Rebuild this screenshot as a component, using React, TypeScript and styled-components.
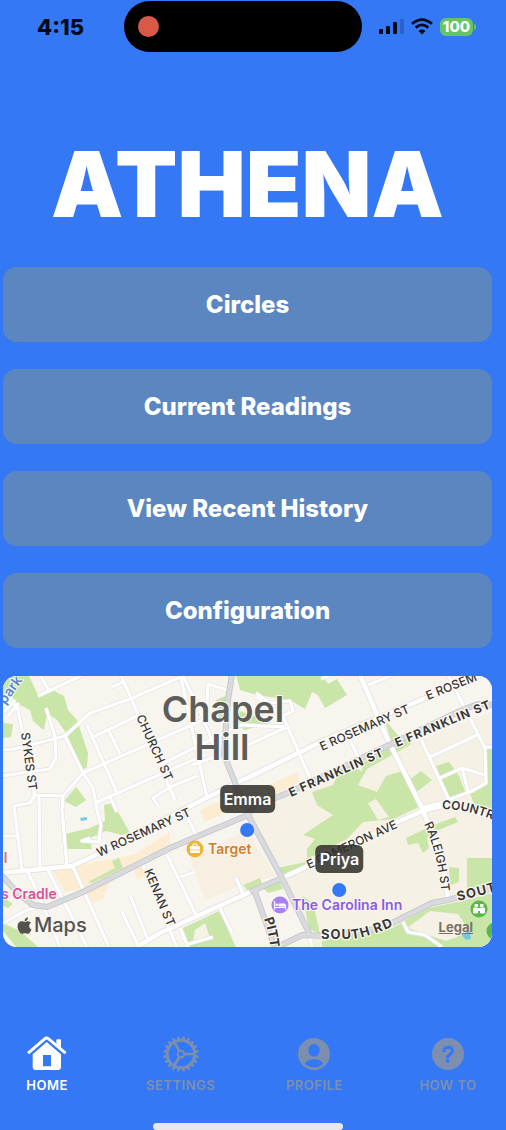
import React from "react";
import styled, { createGlobalStyle } from "styled-components";
import { FaApple } from "react-icons/fa";

const font = `Inter, "Liberation Sans", sans-serif`;

const GlobalStyle = createGlobalStyle`
  * { box-sizing: border-box; }
  body { margin: 0; background: #3478f6; font-family: ${font}; }
`;

const Screen = styled.div`
  display: flex;
  flex-direction: column;
  min-height: 100vh;
  overflow-x: hidden;
  background: #3478f6;
`;

const StatusBar = styled.header`
  display: grid;
  grid-template-columns: 1fr 238px 1fr;
  align-items: center;
  padding: 1px 20px 0 0;
`;

const Clock = styled.time`
  padding-right: 3px;
  text-align: center;
  font-size: 22px;
  line-height: 24px;
  font-weight: 800;
  color: #050a14;
`;

const Island = styled.div`
  display: flex;
  align-items: center;
  height: 51px;
  padding-left: 14px;
  border-radius: 26px;
  background: #000;
`;

const RecordingDot = styled.span`
  width: 21px;
  height: 21px;
  border-radius: 50%;
  background: #d95847;
`;

const StatusIcons = styled.div`
  display: flex;
  justify-content: flex-end;
  align-items: center;
  gap: 7px;
  padding-right: 10px;
`;

const Battery = styled.div`
  display: flex;
  align-items: center;
  gap: 1px;
`;

const BatteryLevel = styled.span`
  width: 33px;
  border-radius: 6px;
  background: #65c466;
  color: #fff;
  font-size: 15px;
  line-height: 18px;
  font-weight: 800;
  text-align: center;
`;

const BatteryCap = styled.span`
  width: 2px;
  height: 6px;
  border-radius: 0 2px 2px 0;
  background: #65c466;
`;

const Content = styled.main`
  display: flex;
  flex-direction: column;
  padding: 76px 14px 0 3px;
`;

const Title = styled.h1`
  margin: 0 0 27px;
  color: #fff;
  font-size: 91px;
  line-height: 112px;
  font-weight: 900;
  text-align: center;
`;

const Menu = styled.div`
  display: flex;
  flex-direction: column;
  gap: 27px;
`;

const MenuButton = styled.button`
  height: 75px;
  border: 0;
  border-radius: 14px;
  background: #5c86bf;
  color: #fff;
  font-family: ${font};
  font-size: 24px;
  line-height: 28px;
  font-weight: 800;
`;

const MapCard = styled.section`
  position: relative;
  margin-top: 28px;
  overflow: hidden;
  border-radius: 14px;
  background: #f8f4ee;
`;

const MapDrawing = styled.svg`
  display: block;
  width: 100%;
  height: auto;
  font-family: ${font};
`;

const Pin = styled.button<{ $x: number; $y: number }>`
  position: absolute;
  left: ${(p) => p.$x}%;
  top: ${(p) => p.$y}%;
  transform: translateX(-50%);
  display: flex;
  flex-direction: column;
  align-items: center;
  gap: 10px;
  padding: 0;
  border: 0;
  background: none;
  font-family: ${font};
`;

const PinName = styled.span`
  padding: 0 4px;
  border-radius: 6px;
  background: rgba(48, 46, 42, 0.86);
  color: #fff;
  font-size: 16px;
  line-height: 28px;
  font-weight: 600;
`;

const PinDot = styled.span`
  width: 14px;
  height: 14px;
  border-radius: 50%;
  background: #3478f6;
`;

const MapBrand = styled.div`
  position: absolute;
  left: 12px;
  bottom: 9px;
  display: flex;
  align-items: center;
  color: #555350;
  font-size: 20px;
  line-height: 26px;
  font-weight: 500;
`;

const LegalLink = styled.a`
  position: absolute;
  right: 19px;
  bottom: 12px;
  color: #77736a;
  font-size: 13px;
  line-height: 16px;
  font-weight: 700;
`;

const TabBar = styled.nav`
  display: flex;
  justify-content: space-between;
  margin-top: auto;
  padding: 0 18px 0 7px;
`;

const Tab = styled.button<{ $active?: boolean }>`
  display: flex;
  flex-direction: column;
  align-items: center;
  width: 80px;
  gap: 4px;
  padding: 0;
  border: 0;
  background: none;
  color: ${(p) => (p.$active ? "#fff" : "#7d8fae")};
  font-family: ${font};
  font-size: 13px;
  line-height: 18px;
  font-weight: 600;
  letter-spacing: 0.5px;
  white-space: nowrap;
`;

const HomeIndicator = styled.div`
  width: 190px;
  height: 7px;
  margin: 29px auto 0;
  border-radius: 4px;
  background: #e6e7ef;
`;

const IndicatorRow = styled.div`
  display: flex;
  padding-right: 10px;
`;

const SignalIcon = () => (
  <svg width="25" height="17" viewBox="0 0 25 17" aria-hidden="true">
    <rect x="0" y="11" width="4" height="5" rx="1" fill="#050a14" />
    <rect x="7" y="8" width="4" height="8" rx="1" fill="#050a14" />
    <rect x="14" y="4" width="4" height="12" rx="1" fill="#050a14" />
    <rect x="21" y="1" width="4" height="15" rx="1" fill="#2b62c9" />
  </svg>
);

const WifiIcon = () => (
  <svg width="22" height="17" viewBox="0 0 22 17" aria-hidden="true">
    <g fill="none" stroke="#050a14" strokeWidth="2.7">
      <path d="M1 5.7 Q11-2.6 21 5.7" />
      <path d="M4.7 9.6 Q11 4.3 17.3 9.6" />
    </g>
    <path d="M11 16.4 L7.5 12.9 Q11 10 14.5 12.9Z" fill="#050a14" />
  </svg>
);

const HouseIcon = () => (
  <svg width="40" height="36" viewBox="82 46 120 108" aria-hidden="true">
    <path
      fill="currentColor"
      fillRule="evenodd"
      d="M141 64 L184 101 V139 Q184 148 175 148 H108 Q99 148 99 139 V101Z M130 103 V137 H154 V103Z"
    />
    <path fill="currentColor" d="M170 58 Q170 56 172 56 H182 Q184 56 184 58 V84 L170 72Z" />
    <path d="M88 95 L136 54 Q141 50 146 54 L195 95" fill="none" stroke="currentColor" strokeWidth="9" strokeLinecap="round" />
  </svg>
);

const GearIcon = () => (
  <svg width="36" height="36" viewBox="-54 -54 108 108" aria-hidden="true">
    <g fill="none" stroke="currentColor" strokeWidth="8">
      <circle r="41" />
      <circle r="10" strokeWidth="6" />
      {[0, 120, 240].map((a) => (
        <path key={a} d="M11 0 H40" transform={`rotate(${a})`} />
      ))}
    </g>
    {Array.from({ length: 20 }, (_, i) => (
      <path key={i} d="M-5.5 -43 L-3 -53 H3 L5.5 -43Z" fill="currentColor" transform={`rotate(${i * 18 + 9})`} />
    ))}
  </svg>
);

const PersonIcon = () => (
  <svg width="36" height="36" viewBox="-54 -54 108 108" aria-hidden="true">
    <circle r="48" fill="currentColor" />
    <ellipse cy="-11" rx="17" ry="19" fill="#3478f6" />
    <path d="M-28 29 Q-20 16 0 16 T28 29 Q16 40 0 40 T-28 29Z" fill="#3478f6" />
  </svg>
);

const QuestionIcon = () => (
  <svg width="36" height="36" viewBox="-54 -54 108 108" aria-hidden="true">
    <circle r="48" fill="currentColor" />
    <path d="M-12 -10 Q-12 -20 0 -20 Q13 -20 13 -9 Q13 -3 6 1 Q-1 5 -1 10" fill="none" stroke="#3478f6" strokeWidth="9" strokeLinecap="round" />
    <circle cx="-1" cy="21" r="6" fill="#3478f6" />
  </svg>
);

const parks = [
  "M3 676H29L39 697 54 691 64 696 68 710 77 720 88 753 87 767 82 770 79 762 66 733 57 720 47 713 44 730 41 728 33 721 30 710 22 706 12 700 3 697Z",
  "M3 723 13 724 11 737 3 738Z",
  "M64 801 76 787 86 800 76 807Z",
  "M104 805 113 803 130 833 122 835 106 831 90 838 92 849 66 849 65 834 90 828 105 821Z",
  "M88 882 115 868 112 861 119 858 123 868 92 883Z",
  "M3 923 20 931 38 947H16L3 931Z",
  "M3 897 13 904 8 908 3 906Z",
  "M236 675H322L328 684 337 679 347 695 325 708 318 695 312 692 305 709 290 700 257 695 240 690Z",
  "M237 710 272 722 245 730 236 724Z",
  "M216 700 228 695 226 722 219 719Z",
  "M312 792 333 785 340 769 353 765 362 772 363 762 390 747 413 737 410 745 367 769 358 785 377 792 386 776 402 771 423 805 393 819 363 822 347 839 307 859 307 849 315 839 303 835 333 815 317 805Z",
  "M385 720 402 740 391 742Z",
  "M436 766 449 762 459 776 466 794 450 797 442 780Z",
  "M405 783 421 771 432 780 414 794Z",
  "M485 748H492V812L474 804 470 793 486 784Z",
  "M406 838 431 826 455 817 458 822 436 831 427 838 429 848 423 853 418 843 408 845Z",
  "M467 858H492V886L467 890Z",
  "M449 867 459 868 459 882 450 885Z",
  "M392 928 428 908 458 902 492 893V947H322V941Z",
  "M243 885 260 878 263 887 248 892Z",
  "M262 887 280 881 283 889 268 893Z",
  "M277 868 310 861 284 878Z",
  "M303 896 313 903 320 934 309 929Z",
  "M183 928 219 911 236 947H190Z",
];

const clearings = [
  "M193 940 195 930 205 923 210 938Z",
  "M407 928 430 911 458 914 470 932 446 941Z",
  "M368 803 376 799 389 817 378 820Z",
];

const streets = [
  "M0 750 14 749 65 736 90 713 130 699 192 672",
  "M46 708 55 736 56 757 50 769 0 776",
  "M4 702 17 705 34 790 34 797 30 803 14 806 22 870",
  "M4 712 15 700M8 716 19 703M3 707 12 697",
  "M65 736 83 773 93 788 97 810 101 825 99 842 M99 842 82 841 90 838",
  "M34 795 63 796 83 773 203 720",
  "M63 796 62 810 67 866",
  "M39 796 40 868",
  "M3 836 17 836",
  "M87 725 118 795 M110 797 117 812",
  "M93 737 137 716",
  "M109 731 120 754",
  "M95 803 170 770 205 755",
  "M121 675 133 703 175 800",
  "M40 675 50 692M38 696 83 675",
  "M112 687 123 682",
  "M170 787 153 798 158 806M170 787 197 776",
  "M180 673 207 798",
  "M160 765 240 725 290 727",
  "M183 676 200 711 220 760",
  "M207 703 208 684 227 690",
  "M248 745 287 727 M282 714 310 778",
  "M256 693 270 703 290 701 293 711 283 716 256 697",
  "M192 765 220 755",
  "M27 870 43 905 60 947",
  "M48 870 87 947",
  "M73 867 109 947",
  "M143 865 178 950",
  "M122 912 138 945M130 895 148 940",
  "M167 855 197 917M181 877 195 872",
  "M3 923 25 911 43 905",
  "M183 808 197 837",
  "M236 878 243 894M220 908 232 933",
  "M180 928 188 947M185 945 213 937",
  "M368 685 400 672",
  "M448 675 485 748 486 783 472 791 440 803 420 808",
  "M485 747 492 747",
  "M420 737 449 800",
  "M430 757 477 735",
  "M440 778 462 768 485 775M462 768 468 791",
  "M350 740 358 757",
  "M403 922 408 932 425 935 442 947",
  "M309 935 312 947M321 679 330 675",
];

const avenues = [
  "M0 873 72 866 100 853 206 798 243 780 325 740 428 697 490 671",
  "M137 947 160 933 250 892",
  "M282 878 325 858 397 822 425 810 441 806 460 807 492 818",
  "M360 675 388 740 422 808 442 858 448 898",
];

const highways = [
  "M0 874 20 895 33 905 47 907 83 892 170 848 248 815 253 807 290 792 385 747 460 711 478 704 494 705",
  "M232 674 228 700 225 740 224 755 230 770 240 795 248 815 282 878 310 935",
  "M278 947 302 935 325 936 370 930 392 923 432 903 448 900 494 888",
  "M250 892 282 878M255 892 275 948",
];

type StreetLabel = { id: string; text: string; d: string; size: number; weight: number; spacing?: number };

const labels: StreetLabel[] = [
  { id: "sykes", text: "SYKES ST", d: "M21 733 L30 800", size: 12, weight: 500 },
  { id: "church", text: "CHURCH ST", d: "M136 717 L174 800", size: 12, weight: 500 },
  { id: "kenan", text: "KENAN ST", d: "M144 871 L176 947", size: 12, weight: 500 },
  { id: "wrosemary", text: "W ROSEMARY ST", d: "M99 857 L219 803", size: 12, weight: 500 },
  { id: "erosemary", text: "E ROSEMARY ST", d: "M322 751 L442 698", size: 12, weight: 500 },
  { id: "erosemary2", text: "E ROSEM", d: "M428 700 L540 655", size: 12, weight: 500 },
  { id: "franklin", text: "E FRANKLIN ST", d: "M291 797 L411 744", size: 12, weight: 700, spacing: 1 },
  { id: "franklin2", text: "E FRANKLIN ST", d: "M397 747 L517 697", size: 12, weight: 700, spacing: 1 },
  { id: "cameron", text: "E CAMERON AVE", d: "M309 869 L429 813", size: 12, weight: 500 },
  { id: "raleigh", text: "RALEIGH ST", d: "M424 824 Q439 855 442 900", size: 12, weight: 500 },
  { id: "country", text: "COUNTR", d: "M442 809 Q470 809 500 823 L560 851", size: 12, weight: 600 },
  { id: "south", text: "SOUTH RD", d: "M321 939 H352 Q368 938 410 919", size: 13, weight: 700, spacing: 1 },
  { id: "south2", text: "SOUT", d: "M458 901 L540 880", size: 13, weight: 700, spacing: 1 },
  { id: "pitts", text: "PITT", d: "M264 919 Q272 938 274 1000", size: 13, weight: 700 },
];

const TownMap = () => (
  <MapDrawing viewBox="3 676 489 271" role="img" aria-label="Map of Chapel Hill">
    <rect x="3" y="676" width="489" height="271" fill="#f8f4ee" />
    <path d="M250 815 300 790 420 740 492 712V947H310L282 878Z" fill="#f6f1e5" />
    <g fill="#fcecd2">
      <path d="M52 870 133 855 170 832 170 845 83 889 65 892Z" />
      <path d="M85 893 110 881 103 898 93 903Z" />
      <path d="M134 868 143 865 146 875 137 880Z" />
      <path d="M200 810 240 792 240 806 205 822Z" />
      <path d="M268 785 298 772 299 781 275 795Z" />
    </g>
    <path d="M190 858 246 830 275 876 240 885 205 901Z" fill="#f6efe2" />
    <g fill="#c9e5a8">{parks.map((d) => <path key={d} d={d} />)}</g>
    <g fill="#f6f1e5">{clearings.map((d) => <path key={d} d={d} />)}</g>
    <path d="M80 818 87 817 87 820 81 821ZM461 934 470 931 471 939 466 940Z" fill="#74c9e8" />
    <g fill="none" strokeLinejoin="round">
      {streets.map((d) => <path key={d} d={d} stroke="#e2e1e2" strokeWidth="4.4" />)}
      {avenues.map((d) => <path key={d} d={d} stroke="#e0dfe0" strokeWidth="6" />)}
      {streets.map((d) => <path key={d} d={d} stroke="#fff" strokeWidth="3.2" />)}
      {avenues.map((d) => <path key={d} d={d} stroke="#fff" strokeWidth="4.6" />)}
      {highways.map((d) => <path key={d} d={d} stroke="#c3c5c9" strokeWidth="6" />)}
      {highways.map((d) => <path key={d} d={d} stroke="#d9dadd" strokeWidth="4.4" />)}
    </g>
    <g fill="#393735" stroke="#fbf8f3" strokeWidth="2.5" strokeLinejoin="round" paintOrder="stroke">
      {labels.map((l) => (
        <React.Fragment key={l.id}>
          <path id={l.id} d={l.d} fill="none" stroke="none" />
          <text fontSize={l.size} fontWeight={l.weight} letterSpacing={l.spacing ?? 0}>
            <textPath href={`#${l.id}`}>{l.text}</textPath>
          </text>
        </React.Fragment>
      ))}
    </g>
    <g stroke="#fbf8f3" strokeWidth="2" strokeLinejoin="round" paintOrder="stroke">
      <g fill="#5d5d5b" fontSize="36" fontWeight="600" textAnchor="middle">
        <text x="223" y="722">Chapel</text>
        <text x="222" y="760">Hill</text>
      </g>
      <g fontSize="14" fontWeight="600">
        <text x="208" y="854" fill="#cf7f2c">Target</text>
        <text x="292" y="910" fill="#8a5be3">The Carolina Inn</text>
        <text x="1" y="899" fill="#dd5094">s Cradle</text>
        <text x="0" y="863" fill="#d9743f">ll</text>
        <text x="0" y="0" fill="#5688c4" transform="translate(5 705) rotate(-54)">park</text>
      </g>
    </g>
    <g transform="translate(195 849)">
      <circle r="8.5" fill="#ecb43c" />
      <rect x="-5" y="-3" width="10" height="7" rx="1" fill="#fff" />
      <path d="M-2 -3 V-5 H2 V-3" fill="none" stroke="#fff" />
      <path d="M-5 1 H5" stroke="#ecb43c" strokeWidth=".7" />
    </g>
    <g transform="translate(280 905)">
      <circle r="8.5" fill="#a883ee" />
      <path d="M-5.5 -4 V4.5 M-5.5 2.5 H5.5 V4.5 M5.5 3 V0" fill="none" stroke="#fff" strokeWidth="1.2" />
      <rect x="-1.5" y="-1.5" width="7" height="3" rx="1" fill="#fff" />
      <circle cx="-3.3" cy="-.2" r="1.3" fill="#fff" />
    </g>
    <g transform="translate(479 909)">
      <circle r="8.5" fill="#57b947" />
      <g fill="#fff">
        <rect x="-4.5" y="-5" width="3.6" height="3" rx="1" />
        <rect x=".9" y="-5" width="3.6" height="3" rx="1" />
        <rect x="-6" y="-1.5" width="5" height="6" rx="1.3" />
        <rect x="1" y="-1.5" width="5" height="6" rx="1.3" />
        <rect x="-1.5" y="-1" width="3" height="3" />
      </g>
    </g>
    <circle cx="495" cy="931" r="8.5" fill="#57b947" />
  </MapDrawing>
);

const menuItems = ["Circles", "Current Readings", "View Recent History", "Configuration"];

const tabs = [
  { name: "HOME", Icon: HouseIcon },
  { name: "SETTINGS", Icon: GearIcon },
  { name: "PROFILE", Icon: PersonIcon },
  { name: "HOW TO", Icon: QuestionIcon },
];

const people = [
  { name: "Emma", x: 50, y: 40.4 },
  { name: "Priya", x: 68.8, y: 62.4 },
];

export default function App() {
  return (
    <Screen>
      <GlobalStyle />
      <StatusBar>
        <Clock>4:15</Clock>
        <Island>
          <RecordingDot />
        </Island>
        <StatusIcons>
          <SignalIcon />
          <WifiIcon />
          <Battery>
            <BatteryLevel>100</BatteryLevel>
            <BatteryCap />
          </Battery>
        </StatusIcons>
      </StatusBar>
      <Content>
        <Title>ATHENA</Title>
        <Menu>
          {menuItems.map((item) => (
            <MenuButton key={item} type="button">{item}</MenuButton>
          ))}
        </Menu>
        <MapCard>
          <TownMap />
          {people.map((p) => (
            <Pin key={p.name} type="button" $x={p.x} $y={p.y}>
              <PinName>{p.name}</PinName>
              <PinDot />
            </Pin>
          ))}
          <MapBrand>
            <FaApple size={19} aria-hidden="true" />
            Maps
          </MapBrand>
          <LegalLink href="#legal">Legal</LegalLink>
        </MapCard>
      </Content>
      <TabBar>
        {tabs.map(({ name, Icon }, i) => (
          <Tab key={name} type="button" $active={i === 0} aria-current={i === 0 ? "page" : undefined}>
            <Icon />
            {name}
          </Tab>
        ))}
      </TabBar>
      <IndicatorRow>
        <HomeIndicator />
      </IndicatorRow>
    </Screen>
  );
}
